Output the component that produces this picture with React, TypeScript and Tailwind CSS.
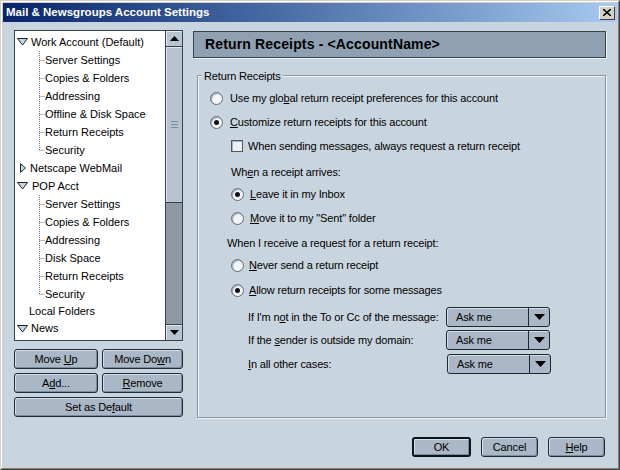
import React from 'react'

const FONT = "font-['Liberation_Sans',Arial,sans-serif]"

// access key letter
const K = ({ c }: { c: string }) => <span className="underline underline-offset-[1px]">{c}</span>

const Radio = ({ checked }: { checked?: boolean }) => (
    <span className="w-[13px] h-[13px] shrink-0 rounded-full border border-[#5f6b78] bg-[#f3f5f7] shadow-[inset_1px_1px_1px_#9aa6b2] flex items-center justify-center">
        {checked && <span className="w-[5px] h-[5px] rounded-full bg-[#111]" />}
    </span>
)

const Btn = ({ children, w, def }: { children: React.ReactNode; w?: string; def?: boolean }) => (
    <div
        className={`${w || 'w-full'} h-[20px] rounded-[3px] ${def ? 'border-2 border-[#0c141c]' : 'border border-[#1e2a36]'} bg-[#aab7c6] shadow-[inset_1px_1px_0_#d6dee6,inset_-1px_-1px_0_#7d8a98] flex items-center justify-center text-[11px] text-black`}
    >
        <span className="whitespace-pre">{children}</span>
    </div>
)

const DownTri = () => (
    <svg width="11" height="8" viewBox="0 0 11 8" className="shrink-0">
        <polygon points="0.5,0.5 10.5,0.5 5.5,7" fill="#c9d3dc" stroke="#1b232c" strokeWidth="1" />
    </svg>
)

const RightTri = () => (
    <svg width="6" height="10" viewBox="0 0 6 10" className="shrink-0">
        <polygon points="0.5,0.5 5.5,5 0.5,9.5" fill="#c9d3dc" stroke="#1b232c" strokeWidth="1" />
    </svg>
)

const Connector = ({ last }: { last?: boolean }) => (
    <svg width="7" height="18" viewBox="0 0 7 18" className="shrink-0">
        <line x1="0.5" y1="0" x2="0.5" y2={last ? 9 : 18} stroke="#7a7a7a" strokeDasharray="1 1" />
        <line x1="0.5" y1="9.5" x2="6" y2="9.5" stroke="#7a7a7a" strokeDasharray="1 1" />
    </svg>
)

const Child = ({ label, last }: { label: string; last?: boolean }) => (
    <div className="h-[18px] flex items-center pl-[24px]">
        <Connector last={last} />
        <span className="ml-[-1px] whitespace-nowrap">{label}</span>
    </div>
)

const Dropdown = () => (
    <div className="w-[104px] h-[20px] rounded-[3px] border border-[#1c2834] bg-[#aab7c6] shadow-[inset_1px_1px_0_#d6dee6] flex items-center">
        <span className="flex-1 pl-[9px]">Ask me</span>
        <div className="w-[21px] h-full border-l border-[#1c2834] flex items-center justify-center">
            <svg width="11" height="6" viewBox="0 0 11 6"><polygon points="0,0 11,0 5.5,6" fill="#000" /></svg>
        </div>
    </div>
)

export default function App() {
    const work = ['Server Settings', 'Copies & Folders', 'Addressing', 'Offline & Disk Space', 'Return Receipts', 'Security']
    const pop = ['Server Settings', 'Copies & Folders', 'Addressing', 'Disk Space', 'Return Receipts', 'Security']
    return (
        <div className={`${FONT} w-[620px] h-[470px] border border-t-[#d4d0c8] border-l-[#d4d0c8] border-r-[#404040] border-b-[#404040] bg-[#d4d0c8] text-[11px] tracking-[-0.15px] text-black`}>
            <div className="w-full h-full border border-t-white border-l-white border-r-[#808080] border-b-[#808080] p-[1px] flex flex-col">
                {/* title bar */}
                <div className="h-[19px] bg-gradient-to-r from-[#0a246a] to-[#a6caf0] flex items-center pl-[3px] pr-[2px]">
                    <span className="flex-1 text-white font-bold text-[11.5px] tracking-normal">Mail &amp; Newsgroups Account Settings</span>
                    <div className="w-[16px] h-[14px] bg-[#d4d0c8] border border-t-white border-l-white border-r-[#404040] border-b-[#404040] flex items-center justify-center">
                        <svg width="8" height="7" viewBox="0 0 8 7">
                            <path d="M0 0 L8 7 M8 0 L0 7" stroke="#000" strokeWidth="1.6" />
                        </svg>
                    </div>
                </div>

                {/* body */}
                <div className="flex-1 bg-[#c9d5de] flex pl-[11px] pt-[8px]">
                    {/* left column */}
                    <div className="w-[169px] flex flex-col">
                        <div className="h-[311px] border border-[#36414c] bg-white flex">
                            <div className="flex-1 pt-[2px] overflow-hidden tracking-normal">
                                <div className="h-[18px] flex items-center pl-[2px] gap-[3px]"><DownTri /><span>Work Account (Default)</span></div>
                                {work.map((l, i) => <Child key={'w' + i} label={l} last={i === work.length - 1} />)}
                                <div className="h-[18px] flex items-center pl-[5px] gap-[4px]"><RightTri /><span>Netscape WebMail</span></div>
                                <div className="h-[18px] flex items-center pl-[2px] gap-[4px]"><DownTri /><span>POP Acct</span></div>
                                {pop.map((l, i) => <Child key={'p' + i} label={l} last={i === pop.length - 1} />)}
                                <div className="h-[17px] flex items-center pl-[14px]"><span>Local Folders</span></div>
                                <div className="h-[17px] flex items-center pl-[2px] gap-[3px]"><DownTri /><span>News</span></div>
                            </div>
                            {/* scrollbar */}
                            <div className="w-[17px] border-l border-[#36414c] flex flex-col bg-[#8e99a4]">
                                <div className="h-[16px] bg-[#b8c4d0] border-b border-[#36414c] shadow-[inset_1px_1px_0_#e4eaf0] flex items-center justify-center">
                                    <svg width="9" height="5" viewBox="0 0 9 5"><polygon points="0,5 9,5 4.5,0" fill="#000" /></svg>
                                </div>
                                <div className="h-[156px] bg-[#b6c2ce] border-b border-[#36414c] shadow-[inset_1px_1px_0_#dfe6ed] flex flex-col items-center justify-center gap-[2px]">
                                    <span className="w-[7px] h-[1px] bg-[#7d8d9c]" />
                                    <span className="w-[7px] h-[1px] bg-[#7d8d9c]" />
                                    <span className="w-[7px] h-[1px] bg-[#7d8d9c]" />
                                </div>
                                <div className="flex-1" />
                                <div className="h-[16px] bg-[#b8c4d0] border-t border-[#36414c] shadow-[inset_1px_1px_0_#e4eaf0] flex items-center justify-center">
                                    <svg width="9" height="5" viewBox="0 0 9 5"><polygon points="0,0 9,0 4.5,5" fill="#000" /></svg>
                                </div>
                            </div>
                        </div>
                        <div className="mt-[8px] grid grid-cols-[84px_81px] gap-[4px]">
                            <Btn>Move <K c="U" />p</Btn>
                            <Btn>Move Do<K c="w" />n</Btn>
                            <Btn>A<K c="d" />d...</Btn>
                            <Btn><K c="R" />emove</Btn>
                            <div className="col-span-2"><Btn>Set as De<K c="f" />ault</Btn></div>
                        </div>
                    </div>

                    {/* right column */}
                    <div className="ml-[10px] w-[413px] pt-[1px] flex flex-col">
                        <div className="h-[27px] bg-[#8fa0b2] border border-[#36434f] shadow-[1px_1px_0_#eef2f6] flex items-center pl-[11px]">
                            <span className="font-bold text-[14px] tracking-[0.15px]">Return Receipts - &lt;AccountName&gt;</span>
                        </div>

                        <div className="relative mt-[17px] ml-[4px] h-[343px] border border-[#8995a1] shadow-[inset_1px_1px_0_#f2f5f8,1px_1px_0_#f2f5f8] pt-[12px] pl-[12px] flex flex-col">
                            <span className="absolute left-[4px] top-[-8px] px-[2px] bg-[#c9d5de]">Return Receipts</span>

                            <div className="h-[20px] flex items-center gap-[7px]"><Radio /><span>Use my glo<K c="b" />al return receipt preferences for this account</span></div>
                            <div className="h-[20px] mt-[4px] flex items-center gap-[7px]"><Radio checked /><span><K c="C" />ustomize return receipts for this account</span></div>
                            <div className="h-[20px] mt-[4px] ml-[21px] flex items-center gap-[5px]">
                                <span className="w-[12px] h-[12px] border border-[#4f5a66] bg-[#eef1f4] shadow-[inset_1px_1px_0_#a6b0ba]" />
                                <span>When sending messages, always request a return receipt</span>
                            </div>
                            <div className="h-[20px] mt-[6px] ml-[21px] flex items-center"><span>Wh<K c="e" />n a receipt arrives:</span></div>
                            <div className="h-[20px] mt-[2px] ml-[21px] flex items-center gap-[6px]"><Radio checked /><span><K c="L" />eave it in my Inbox</span></div>
                            <div className="h-[20px] mt-[4px] ml-[21px] flex items-center gap-[6px]"><Radio /><span><K c="M" />ove it to my "Sent" folder</span></div>
                            <div className="h-[20px] mt-[5px] ml-[17px] flex items-center"><span>When I receive a request for a return receipt:</span></div>
                            <div className="h-[20px] mt-[2px] ml-[21px] flex items-center gap-[5px]"><Radio /><span><K c="N" />ever send a return receipt</span></div>
                            <div className="h-[20px] mt-[5px] ml-[21px] flex items-center gap-[5px]"><Radio checked /><span><K c="A" />llow return receipts for some messages</span></div>

                            <div className="h-[20px] mt-[7px] ml-[38px] flex items-center">
                                <span className="w-[198px]">If I'm n<K c="o" />t in the To or Cc of the message:</span>
                                <Dropdown />
                            </div>
                            <div className="h-[20px] mt-[3px] ml-[38px] flex items-center">
                                <span className="w-[198px]">If the <K c="s" />ender is outside my domain:</span>
                                <Dropdown />
                            </div>
                            <div className="h-[20px] mt-[4px] ml-[38px] flex items-center">
                                <span className="w-[199px]"><K c="I" />n all other cases:</span>
                                <Dropdown />
                            </div>
                        </div>

                        <div className="mt-[19px] flex justify-end gap-[10px] pr-[1px]">
                            <Btn w="w-[59px]" def>OK</Btn>
                            <Btn w="w-[57px]">Cancel</Btn>
                            <Btn w="w-[57px]"><K c="H" />elp</Btn>
                        </div>
                    </div>
                </div>
            </div>
        </div>
    )
}
